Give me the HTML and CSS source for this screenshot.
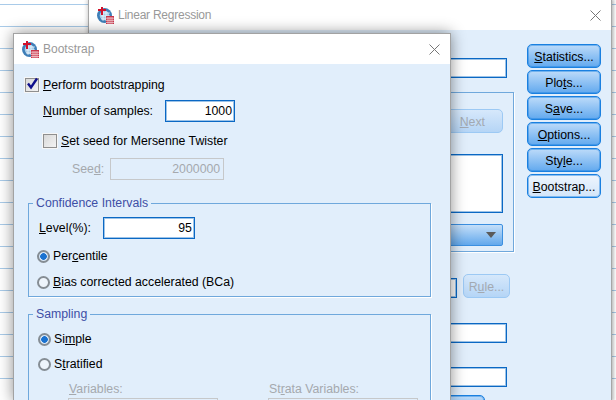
FILE: index.html
```html
<!DOCTYPE html>
<html lang="en">
<head>
<meta charset="utf-8">
<title>Bootstrap</title>
<link rel="stylesheet" href="styles.css">
</head>
<body>
<svg class="defs" width="0" height="0" aria-hidden="true">
  <symbol id="spss" viewBox="0 0 17 17">
    <circle cx="7.5" cy="8.5" r="7.5" fill="#3f7fb8"/>
    <circle cx="7.5" cy="8.5" r="4.8" fill="#a9cdea"/>
    <path d="M4 6h9M4 9h9M4 12h9M6 4v10M9 4v10" stroke="#ffffff" stroke-width=".8" opacity=".8"/>
    <path d="M5 0v8M1 3h8" stroke="#d0112b" stroke-width="2"/>
    <rect x="9" y="9" width="8" height="8" fill="#c9354a"/>
    <path d="M9 11.2h8M9 13.4h8M9 15.5h8M11 10v7M13 10v7M15 10v7" stroke="#f6d5da" stroke-width=".7"/>
  </symbol>
  <symbol id="close" viewBox="0 0 11 11">
    <path d="M.5.5l10 10M10.5.5l-10 10" stroke="#777" stroke-width="1" fill="none"/>
  </symbol>
</svg>

<section class="window lr">
  <header class="titlebar lr-title">
    <svg class="app-icon"><use href="#spss"/></svg>
    <span class="title-text">Linear Regression</span>
    <svg class="close"><use href="#close"/></svg>
  </header>
  <div class="lr-body">
    <div class="lr-main">
      <div class="field f1"></div>
      <div class="block-group">
        <button class="btn disabled next"><u>N</u>ext</button>
        <div class="listbox"></div>
        <div class="dropdown"><span class="arrow"></span></div>
      </div>
      <div class="rule-row">
        <div class="field f2"></div>
        <button class="btn disabled rule">R<u>u</u>le...</button>
      </div>
      <div class="field f3"></div>
      <div class="field f4"></div>
      <button class="btn ok"></button>
    </div>
    <div class="lr-side">
      <button class="btn"><u>S</u>tatistics...</button>
      <button class="btn">Plo<u>t</u>s...</button>
      <button class="btn">S<u>a</u>ve...</button>
      <button class="btn"><u>O</u>ptions...</button>
      <button class="btn">Sty<u>l</u>e...</button>
      <button class="btn focus"><u>B</u>ootstrap...</button>
    </div>
  </div>
</section>

<section class="window boot">
  <header class="titlebar boot-title">
    <svg class="app-icon"><use href="#spss"/></svg>
    <span class="title-text">Bootstrap</span>
    <svg class="close"><use href="#close"/></svg>
  </header>
  <div class="boot-body">
    <div class="row perform">
      <span class="check checked"><svg viewBox="0 0 14 14"><path d="M3 7.5l3 4L12 2.5" fill="none" stroke="#10108c" stroke-width="2.4"/></svg></span>
      <span class="label"><u>P</u>erform bootstrapping</span>
    </div>
    <div class="row samples">
      <span class="label"><u>N</u>umber of samples:</span>
      <span class="input w70">1000</span>
    </div>
    <div class="row seedcheck">
      <span class="check"></span>
      <span class="label"><u>S</u>et seed for Mersenne Twister</span>
    </div>
    <div class="row seed">
      <span class="label muted">See<u>d</u>:</span>
      <span class="input off">2000000</span>
    </div>

    <fieldset class="group ci">
      <legend>Confidence Intervals</legend>
      <div class="row level">
        <span class="label"><u>L</u>evel(%):</span>
        <span class="input w92">95</span>
      </div>
      <div class="row pct">
        <span class="radio on"></span>
        <span class="label">Per<u>c</u>entile</span>
      </div>
      <div class="row bca">
        <span class="radio"></span>
        <span class="label"><u>B</u>ias corrected accelerated (BCa)</span>
      </div>
    </fieldset>

    <fieldset class="group sampling">
      <legend>Sampling</legend>
      <div class="row simple">
        <span class="radio on"></span>
        <span class="label">Si<u>m</u>ple</span>
      </div>
      <div class="row strat">
        <span class="radio"></span>
        <span class="label">S<u>t</u>ratified</span>
      </div>
      <div class="vars">
        <div class="var-col">
          <span class="label muted"><u>V</u>ariables:</span>
          <div class="var-box"></div>
        </div>
        <div class="var-col">
          <span class="label muted">St<u>r</u>ata Variables:</span>
          <div class="var-box"></div>
        </div>
      </div>
    </fieldset>
  </div>
</section>
</body>
</html>
```
FILE: styles.css
```css
* { box-sizing: border-box; }

html, body { height: 100%; }

body {
  margin: 0;
  overflow: hidden;
  font-family: "Liberation Sans", Arial, sans-serif;
  font-size: 12.3px;
  color: #000;
  background-color: #fff;
  background-image: linear-gradient(#a9cbe9 1px, transparent 1px);
  background-size: 100% 22px;
  background-position: 0 4px;
}

.defs { position: absolute; }

.window {
  position: absolute;
  background: #e1eefb;
  display: flex;
  flex-direction: column;
  overflow: hidden;
}

.lr {
  left: 88px;
  top: -1px;
  width: 524px;
  height: 402px;
  border: 1px solid #a6a6a6;
  box-shadow: 2px 0 3px rgba(0,0,0,.25), -2px 0 3px rgba(0,0,0,.12);
  overflow: visible;
}

.boot {
  left: 13px;
  top: 33px;
  width: 438px;
  height: 368px;
  border: 1px solid #a2a2a2;
  box-shadow: 0 0 14px rgba(0,0,0,.45);
}

.titlebar {
  display: flex;
  align-items: center;
  background: #fff;
  flex: none;
  height: 30px;
  padding: 0 10px 0 8px;
}

.app-icon { width: 17px; height: 17px; flex: none; margin-right: 4px; }

.title-text { flex: 1; color: #999; font-size: 12px; }

.lr-title .title-text { letter-spacing: -.25px; }

.close { width: 11px; height: 11px; flex: none; }

/* Linear Regression body */
.lr-body { display: flex; flex: 1; }

.lr-main {
  width: 425px;
  display: flex;
  flex-direction: column;
  align-items: flex-end;
  flex: none;
}

.lr-side {
  display: flex;
  flex-direction: column;
  gap: 2px;
  width: 74px;
  margin-left: 13px;
  padding-top: 14px;
}

.field, .listbox, .input {
  background: #fff;
  border: 1px solid #0a68c4;
  box-shadow: inset 0 0 0 1px rgba(10, 104, 196, .4);
}

.field { height: 20px; width: 200px; }

.f1 { margin-top: 28px; margin-right: 7px; }
.f3 { margin-top: 25px; margin-right: 7px; }
.f4 { margin-top: 24px; margin-right: 7px; }

.block-group {
  margin-top: 14px;
  width: 200px;
  height: 160px;
  border: 1px solid #6fa8dc;
  box-shadow: 1px 1px 0 #fff;
  padding: 16px 10px 0 0;
  display: flex;
  flex-direction: column;
  align-items: flex-end;
}

.listbox { width: 150px; height: 59px; margin-top: 21px; }

.dropdown {
  width: 150px;
  height: 22px;
  margin-top: 11px;
  border: 1px solid #3b8fe0;
  border-radius: 2px;
  background: linear-gradient(#c5dff9, #62a8ec);
  display: flex;
  align-items: center;
  justify-content: flex-end;
  padding-right: 6px;
}

.arrow {
  width: 0;
  height: 0;
  border-left: 5px solid transparent;
  border-right: 5px solid transparent;
  border-top: 6px solid #5a5a5a;
}

.rule-row {
  margin-top: 22px;
  margin-right: 4px;
  display: flex;
  align-items: flex-end;
  gap: 6px;
}

.f2 { width: 100px; }

.btn {
  display: block;
  padding: 1px 0 0;
  height: 24px;
  width: 74px;
  font: inherit;
  color: #000;
  text-align: center;
  border: 1px solid #1a80e0;
  border-radius: 5px;
  box-shadow: inset 0 0 0 1px rgba(26, 128, 224, .45);
  background: linear-gradient(#bddbf9, #62a9ee);
}

.btn.focus { background: linear-gradient(#eef5fd, #d2e5f9); }

.btn.disabled {
  color: #a3a9b1;
  border: 1px solid #9cc9f4;
  box-shadow: none;
  background: linear-gradient(#d6e8fb, #b5d5f6);
}

.next { width: 150px; text-align: right; padding-right: 17px; }
.rule { width: 47px; }
.ok { width: 100px; margin-top: 8px; margin-right: 29px; flex: none; }

/* Bootstrap body */
.boot-body {
  flex: 1;
  background: #e1eefb;
  padding: 0 19px 0 14px;
}

.row { display: flex; align-items: center; }

.label { white-space: nowrap; }
.muted { color: #a5a9ae; }

.check {
  width: 14px;
  height: 14px;
  flex: none;
  border: 1px solid #8f8f8f;
  background: linear-gradient(135deg, #d9d9d9, #f3f3f3);
  box-shadow: 0 0 0 1px #f6f6f6;
}

.check svg { display: block; width: 14px; height: 18px; margin: -5px 0 0 -1px; overflow: visible; }

.input {
  display: block;
  height: 22px;
  line-height: 20px;
  text-align: right;
  padding-right: 2px;
}

.w70 { width: 70px; margin-left: 12px; }
.w92 { width: 92px; margin-left: 12px; }

.input.off {
  width: 114px;
  margin-left: 6px;
  background: #e1eefb;
  border: 1px solid #c6c8ca;
  box-shadow: none;
  color: #a5a9ae;
  padding-right: 3px;
}

.perform { margin-top: 13px; height: 16px; }
.perform .check { margin-left: -3px; margin-right: 4px; }

.samples { margin-top: 7px; height: 22px; padding-left: 15px; }
.seedcheck { margin-top: 11px; height: 16px; padding-left: 15px; }
.seedcheck .check { margin-right: 4px; }
.seed { margin-top: 9px; height: 22px; padding-left: 44px; }

.group {
  margin: 0;
  padding: 0;
  min-width: 0;
  border: 1px solid #6fa8dc;
  box-shadow: 1px 1px 0 #fff;
}

.group legend {
  color: #3e4fa6;
  padding: 0 3px;
  margin-left: 4px;
  line-height: 14px;
}

.ci { height: 101px; margin-top: 16px; }
.sampling { height: 100px; margin-top: 10px; }

.level { margin-top: 7px; margin-left: 10px; height: 22px; }

.radio {
  width: 13px;
  height: 13px;
  flex: none;
  border-radius: 50%;
  border: 2px solid #858d94;
  background: #eef5fc;
  margin-right: 3px;
}

.radio.on { background: radial-gradient(circle, #1a72d0 0 3px, #d6e6f6 3.6px); }

.pct { margin-top: 9px; margin-left: 8px; height: 16px; }
.bca { margin-top: 10px; margin-left: 8px; height: 16px; }
.simple { margin-top: 10px; margin-left: 9px; height: 16px; }
.strat { margin-top: 9px; margin-left: 9px; height: 16px; }

.vars {
  display: flex;
  gap: 50px;
  margin-top: 10px;
  margin-left: 39px;
}

.var-col { width: 150px; display: flex; flex-direction: column; gap: 2px; }
.var-col .label { padding-left: 1px; }

.var-box { height: 30px; border: 1px solid #c6c8ca; }
```
